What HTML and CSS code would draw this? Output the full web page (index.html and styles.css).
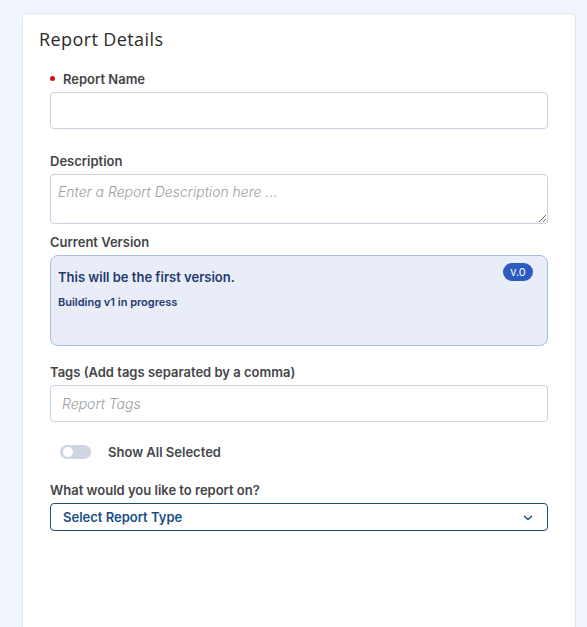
FILE: index.html
```html
<!DOCTYPE html>
<html>
<head>
<meta charset="utf-8">
<link rel="stylesheet" href="styles.css">
</head>
<body>
<div class="card">
  <h2 class="title">Report Details</h2>
  <div class="fields">
    <div class="group g-name">
      <label class="label required"><span class="dot"></span>Report Name</label>
      <input class="input" type="text">
    </div>
    <div class="group g-desc">
      <label class="label">Description</label>
      <textarea class="textarea" placeholder="Enter a Report Description here ..."></textarea>
    </div>
    <div class="group g-version">
      <label class="label">Current Version</label>
      <div class="version">
        <div class="version-title">This will be the first version.</div>
        <div class="version-sub">Building v1 in progress</div>
        <span class="badge">v.0</span>
      </div>
    </div>
    <div class="group g-tags">
      <label class="label">Tags (Add tags separated by a comma)</label>
      <input class="input" type="text" placeholder="Report Tags">
    </div>
    <div class="toggle-row">
      <span class="toggle"><span class="knob"></span></span>
      <span class="toggle-label">Show All Selected</span>
    </div>
    <div class="group g-type">
      <label class="label">What would you like to report on?</label>
      <div class="select">
        <span>Select Report Type</span>
        <svg class="chev" width="10" height="6" viewBox="0 0 10 6"><path d="M1 1 L5 4.5 L9 1" fill="none" stroke="#1b4f85" stroke-width="1.6"/></svg>
      </div>
    </div>
  </div>
</div>
</body>
</html>
```
FILE: styles.css
```css
* { box-sizing: border-box; }
html, body { margin: 0; padding: 0; }
body {
  background: #f1f5fd;
  font-family: Inter, "Noto Sans", sans-serif;
  overflow: hidden;
  height: 627px;
}
.card {
  margin: 13px 0 0 22px;
  width: 554px;
  height: 614px;
  background: #fff;
  border: 1px solid #e3e8f0;
  border-bottom: none;
  border-radius: 4px 4px 0 0;
  padding: 13px 27px 0 16px;
}
.title {
  margin: 0;
  font-family: "Open Sans", Inter, sans-serif;
  font-weight: 400;
  font-size: 18px;
  line-height: 24px;
  color: #2a2a2a;
  letter-spacing: 0.4px;
}
.fields {
  padding-left: 11px;
  padding-top: 20px;
}
.group { display: flex; flex-direction: column; }
.label {
  display: flex;
  align-items: center;
  font-size: 13px;
  font-weight: 600;
  line-height: 17px;
  color: #444648;
  margin-bottom: 4px;
}
.dot {
  width: 5px;
  height: 5px;
  border-radius: 50%;
  background: #d0101e;
  margin: 0 8px 2px 0;
}
.input {
  display: block;
  width: 100%;
  height: 37px;
  border: 1px solid #c9d1de;
  border-radius: 4px;
  padding: 0 11px;
  font-family: Inter, sans-serif;
  font-size: 14px;
  outline: none;
}
.input::placeholder, .textarea::placeholder {
  color: #9a9ea3;
  font-style: italic;
  font-weight: 300;
}
.textarea {
  display: block;
  width: 100%;
  height: 50px;
  border: 1px solid #c9d1de;
  border-radius: 4px;
  padding: 8px 7px;
  font-family: Inter, sans-serif;
  font-size: 14px;
  resize: vertical;
  outline: none;
}
.g-desc { margin-top: 24px; }
.g-version { margin-top: 10px; }
.version {
  position: relative;
  height: 91px;
  background: #e8edf8;
  border: 1px solid #a9bbe6;
  border-radius: 8px;
  padding: 13px 7px;
  color: #233a70;
}
.version-title {
  font-size: 13px;
  font-weight: 600;
  line-height: 17px;
}
.version-sub {
  font-size: 11px;
  font-weight: 600;
  line-height: 15px;
  margin-top: 9px;
}
.badge {
  position: absolute;
  top: 7px;
  right: 14px;
  width: 30px;
  height: 18px;
  border-radius: 9px;
  background: #2d5bbf;
  color: #fff;
  font-size: 11px;
  line-height: 18px;
  text-align: center;
}
.g-tags { margin-top: 18px; }
.toggle-row {
  display: flex;
  align-items: center;
  height: 14px;
  margin-top: 23px;
  padding-left: 10px;
}
.toggle {
  width: 31px;
  height: 14px;
  border-radius: 7px;
  background: #cdd5e3;
  position: relative;
  display: block;
}
.knob {
  position: absolute;
  left: 3px;
  top: 2px;
  width: 10px;
  height: 10px;
  border-radius: 50%;
  background: #fff;
}
.toggle-label {
  margin-left: 17px;
  font-size: 13px;
  font-weight: 600;
  color: #444648;
}
.g-type { margin-top: 23px; }
.select {
  display: flex;
  align-items: center;
  justify-content: space-between;
  height: 28px;
  border: 1.5px solid #1f4e79;
  border-radius: 4px;
  padding: 0 14px 0 12px;
  font-size: 13px;
  font-weight: 600;
  color: #1b4f85;
}
.chev { margin-top: 1px; }
```
